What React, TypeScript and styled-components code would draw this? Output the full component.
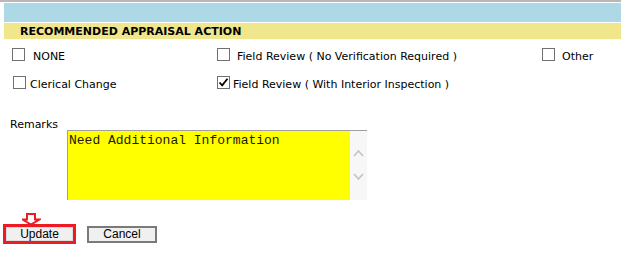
import * as React from 'react';
import styled, { createGlobalStyle } from 'styled-components';

const GlobalStyle = createGlobalStyle`
  html, body {
    margin: 0;
    padding: 0;
    background: #fff;
  }
  body {
    font-family: 'DejaVu Sans', Verdana, sans-serif;
    font-size: 11px;
    color: #000;
  }
`;

const Page = styled.div`
  width: 621px;
  height: 272px;
  display: flex;
  flex-direction: column;
  overflow: hidden;
`;

const TopRule = styled.div`
  height: 2px;
  background: #b8b8b8;
  margin-bottom: 1px;
`;

const Section = styled.div`
  display: flex;
  flex-direction: column;
  padding-left: 4px;
`;

const BlueBar = styled.div`
  height: 19px;
  background: #add8e6;
`;

const HeadBar = styled.div`
  margin-top: 1px;
  height: 16px;
  line-height: 17px;
  background: #f0e68c;
  padding-left: 16px;
  font-weight: bold;
  font-size: 11px;
`;

const Options = styled.div`
  display: grid;
  grid-template-columns: 205px 325px 1fr;
  grid-auto-rows: 13px;
  row-gap: 15px;
  margin-top: 9px;
  padding-left: 12px;
`;

const Option = styled.label<{ $gap: number; $shift?: number }>`
  display: flex;
  align-items: center;
  gap: ${p => p.$gap}px;
  margin-left: ${p => p.$shift || 0}px;
  white-space: nowrap;
  line-height: 13px;
`;

const OptionText = styled.span`
  padding-top: 3px;
`;

const Box = styled.span`
  width: 13px;
  height: 13px;
  box-sizing: border-box;
  border: 1px solid #707070;
  background: #fff;
  flex: 0 0 auto;
  display: flex;
  align-items: center;
  justify-content: center;
`;

const Remarks = styled.div`
  display: flex;
  flex-direction: column;
  margin-top: 30px;
`;

const RemarksLabel = styled.div`
  padding-left: 10px;
  height: 11px;
  line-height: 12px;
`;

const TextBox = styled.div`
  margin-left: 67px;
  width: 299px;
  height: 69px;
  display: flex;
  border-top: 1px solid #a0a0a0;
  border-left: 1px solid #a0a0a0;
`;

const TextArea = styled.div`
  flex: 1;
  background: #ffff00;
  font-family: 'Liberation Mono', 'Courier New', monospace;
  font-size: 13px;
  line-height: 15px;
  padding: 2px 1px;
  color: #1a1a00;
`;

const ScrollTrack = styled.div`
  width: 17px;
  background: #f7f7f7;
  display: flex;
  flex-direction: column;
  align-items: center;
  padding-top: 18px;
  gap: 16px;
`;

const Pointer = styled.div`
  margin: 13px 0 0 22px;
  height: 11px;
  display: flex;
`;

const Buttons = styled.div`
  display: flex;
  align-items: center;
  gap: 11px;
  margin-left: 3px;
`;

const Button = styled.button<{ $highlight?: boolean }>`
  box-sizing: border-box;
  width: ${p => (p.$highlight ? 73 : 70)}px;
  height: ${p => (p.$highlight ? 20 : 17)}px;
  border: ${p => (p.$highlight ? '3px solid #ed1c24' : '2px solid #7a7a7a')};
  background: #f0f0f0;
  font-family: 'Liberation Sans', Arial, sans-serif;
  font-size: 12px;
  color: #000;
  padding: 0;
  margin: 0;
  line-height: 12px;
  box-shadow: ${p => (p.$highlight ? 'inset 0 0 0 1px #dcdcdc' : 'none')};
`;

function Check({ checked }: { checked?: boolean }) {
  return (
    <Box>
      {checked && (
        <svg width="11" height="11" viewBox="0 0 11 11">
          <path d="M1.5 5.5 L4.2 8.3 L9.5 1.8" fill="none" stroke="#000" strokeWidth="1.8" />
        </svg>
      )}
    </Box>
  );
}

function Chevron({ up }: { up?: boolean }) {
  return (
    <svg width="11" height="8" viewBox="0 0 11 8">
      <path
        d={up ? 'M1 7 L5.5 2 L10 7' : 'M1 1 L5.5 6 L10 1'}
        fill="none"
        stroke="#c4c4c4"
        strokeWidth="1.7"
      />
    </svg>
  );
}

export default function App() {
  return (
    <Page>
      <GlobalStyle />
      <TopRule />
      <Section>
        <BlueBar />
        <HeadBar>RECOMMENDED APPRAISAL ACTION</HeadBar>
      </Section>
      <Options>
        <Option $gap={8}>
          <Check />
          <OptionText>NONE</OptionText>
        </Option>
        <Option $gap={7}>
          <Check />
          <OptionText>Field Review ( No Verification Required )</OptionText>
        </Option>
        <Option $gap={7}>
          <Check />
          <OptionText>Other</OptionText>
        </Option>
        <Option $gap={4} $shift={1}>
          <Check />
          <OptionText>Clerical Change</OptionText>
        </Option>
        <Option $gap={3}>
          <Check checked />
          <OptionText>Field Review ( With Interior Inspection )</OptionText>
        </Option>
      </Options>
      <Remarks>
        <RemarksLabel>Remarks</RemarksLabel>
        <TextBox>
          <TextArea>Need Additional Information</TextArea>
          <ScrollTrack>
            <Chevron up />
            <Chevron />
          </ScrollTrack>
        </TextBox>
      </Remarks>
      <Pointer>
        <svg width="19" height="12" viewBox="0 0 19 12">
          <path
            d="M5 1 H13 V6.5 H17.5 L9 11.5 L0.5 6.5 H5 Z"
            fill="#fff"
            stroke="#ed1c24"
            strokeWidth="2"
            strokeLinejoin="miter"
          />
        </svg>
      </Pointer>
      <Buttons>
        <Button $highlight>Update</Button>
        <Button>Cancel</Button>
      </Buttons>
    </Page>
  );
}
